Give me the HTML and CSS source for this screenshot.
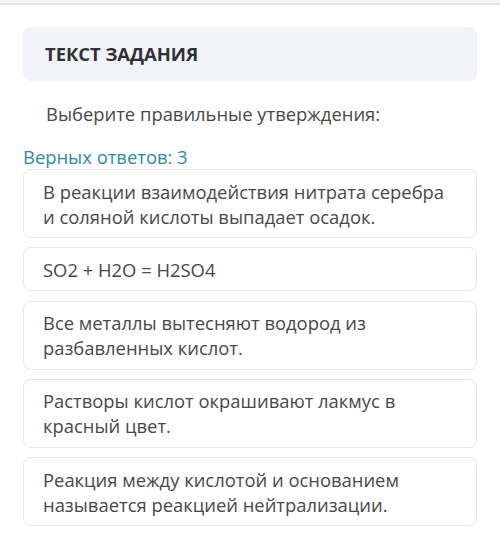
FILE: index.html
```html
<!DOCTYPE html>
<html lang='ru'>
<head>
	<title>Текст задания</title>
	<meta http-equiv='Content-Type' content='text/html; charset=UTF-8'>
	<meta name='viewport' content='width=device-width, initial-scale=1'>
	<link rel="stylesheet" href="styles.css">
</head>
<body>
	<div class='topbar'></div>
	<div class='task'>
		<div class='task-head'>ТЕКСТ ЗАДАНИЯ</div>
		<p class='question'>Выберите правильные утверждения:</p>
		<div class='hint'>Верных ответов: 3</div>
		<div class='answers'>
			<div class='answer'>В реакции взаимодействия нитрата серебра и соляной кислоты выпадает осадок.</div>
			<div class='answer'>SO2 + H2O = H2SO4</div>
			<div class='answer'>Все металлы вытесняют водород из разбавленных кислот.</div>
			<div class='answer'>Растворы кислот окрашивают лакмус в красный цвет.</div>
			<div class='answer'>Реакция между кислотой и основанием называется реакцией нейтрализации.</div>
		</div>
	</div>
</body>
</html>
```

FILE: styles.css
```css
body {
	margin: 0;
	background: #fff;
	font-family: 'Open Sans', 'Noto Sans', sans-serif;
	font-size: 18.4px;
	color: #484848;
}
.topbar {
	height: 3px;
	background: #f7f7f7;
	border-bottom: 2px solid #e4e4e4;
}
.task {
	padding: 22px 23px 0;
}
.task-head {
	height: 54px;
	line-height: 54px;
	padding-left: 22px;
	background: #f2f3f7;
	border-radius: 7px;
	font-weight: 700;
	color: #2e3138;
}
.question {
	margin: 20px 0 0;
	padding-left: 23px;
	line-height: 25px;
}
.hint {
	margin-top: 18px;
	line-height: 25px;
	color: #3388a4;
}
.answers {
	display: flex;
	flex-direction: column;
	gap: 9.25px;
}
.answer {
	border: 1px solid #e6e6e6;
	border-radius: 8px;
	padding: 8.5px 19px;
	line-height: 25px;
}
```
